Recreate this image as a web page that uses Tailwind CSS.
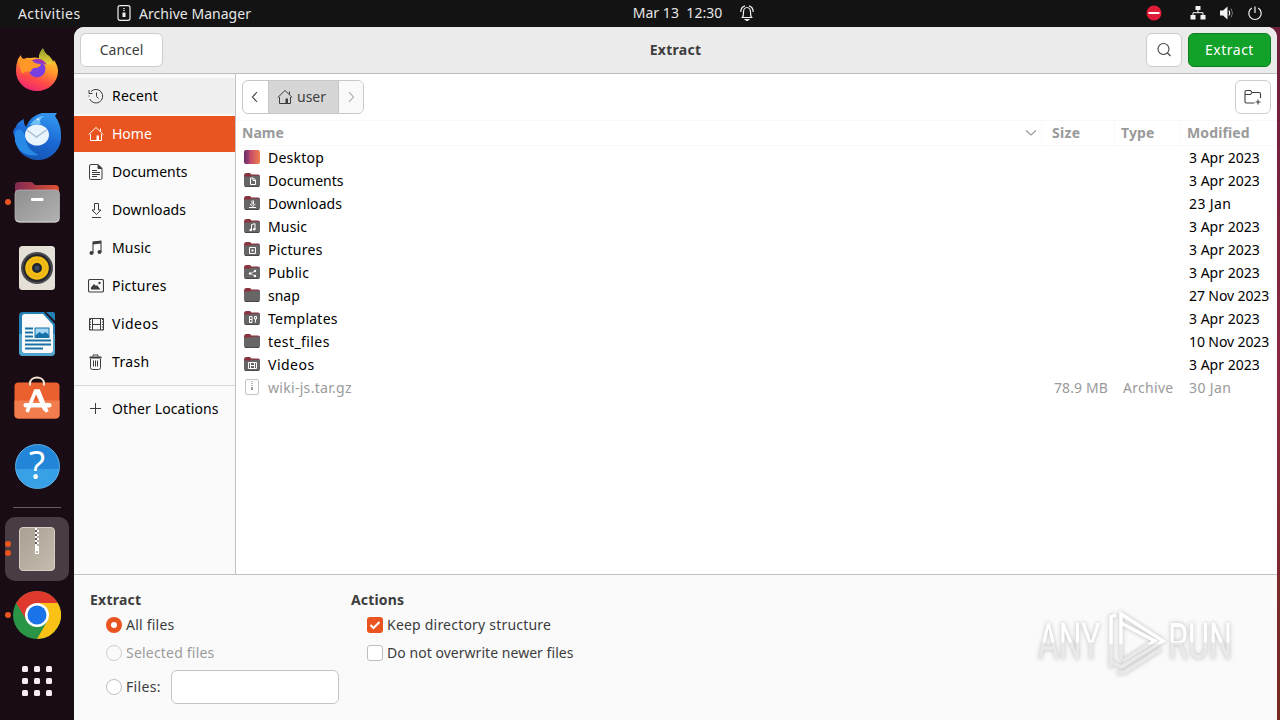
<!DOCTYPE html>
<html lang="en">
<head>
  <meta charset="UTF-8">
  <meta name="viewport" content="width=device-width, initial-scale=1.0">
  <title>Extract - Archive Manager</title>
  <script src="https://cdn.jsdelivr.net/npm/@tailwindcss/browser@4"></script>
</head>
<body class="w-[1280px] h-[720px] overflow-hidden bg-[#180b13] font-['Noto_Sans',sans-serif] text-[14px] leading-5 text-[#3d3d3d]">
  <!-- Shared shapes -->
  <svg class="hidden">
    <symbol id="folder" viewBox="0 0 16 16">
      <path d="M0 3.500Q0 1 2 1h4l1.500 1.500H14Q16 2.500 16 4.500V8H0z" fill="#8a3440"/>
      <path d="M0 5.500Q0 4.500 1 4.500h5L7.500 3.700H15q1 0 1 1V13q0 2-2 2H2q-2 0-2-2z" fill="#686566"/>
      <path d="M1 14.500h14" stroke="#4b4849"/>
    </symbol>
    <symbol id="home" viewBox="0 0 16 16">
      <path d="M.7 8.500 8 1.500l7.300 7M12.500 5V2.500M2.500 8v6.500h11V8" fill="none" stroke="currentColor"/>
      <path d="M8.500 9.500h2.500v5H8.500z" fill="currentColor"/>
    </symbol>
  </svg>

  <!-- Top bar -->
  <header class="grid grid-cols-3 h-[27px] items-center bg-[#131313] text-[#e6e6e6]">
    <div class="flex items-center pl-[18px]">
      <span class="w-[99px] tracking-[0.42px]">Activities</span>
      <svg class="w-[14px] h-[16px] mr-2 -mt-px" viewBox="0 0 14 16" fill="none" stroke="#f2f2f2">
        <rect x="1" y=".7" width="12" height="14.600" rx="2" stroke-width="1.200"/>
        <path d="M7 3v1M7 5v1" stroke-width="1.500"/><path d="M7 7.500v4.500" stroke-width="3"/>
      </svg>
      <span class="tracking-[0.04px]">Archive Manager</span>
    </div>
    <div class="flex items-center pl-[206px] -mt-px">
      <span class="whitespace-pre w-[106px] tracking-[0.05px]">Mar 13  12:30</span>
      <svg class="w-4 h-4" viewBox="0 0 16 16" fill="none" stroke="#f2f2f2" stroke-width="1.200">
        <path d="M2.500 12.500h11M3.500 12.500c1-1.500 1-3 1-5.500C4.500 4.500 6 2.500 8 2.500s3.500 2 3.500 4.500c0 2.500 0 4 1 5.500M1.800 7C1.800 4 3.500 1.500 6 .8M14.200 7C14.200 4 12.500 1.500 10 .8"/>
        <path d="M6.500 14.500h3L8 15.700z" fill="#f2f2f2"/>
      </svg>
    </div>
    <div class="flex items-center justify-end pr-[25px] -mt-px">
      <svg class="w-4 h-4 mr-[28px]" viewBox="0 0 16 16"><circle cx="8" cy="8" r="7.500" fill="#e01b38"/><path d="M2.500 8h11" stroke="#fff" stroke-width="2"/></svg>
      <svg class="w-4 h-4 mr-[13px]" viewBox="0 0 16 16" fill="#f2f2f2"><path d="M5.500 1h5v4h-5zM.5 10h5v4.500h-5zM10.500 10h5v4.500h-5z"/><path d="M8 5v3M3 10V7.700h10V10" fill="none" stroke="#f2f2f2"/></svg>
      <svg class="w-4 h-4 mr-[12px]" viewBox="0 0 16 16"><path d="M1 5.500h3L8.500 1.500v13L4 10.500H1z" fill="#f2f2f2"/><path d="M10 5.500q1.500 2.500 0 5" fill="none" stroke="#f2f2f2" stroke-width="1.200"/><path d="M12 3.500q3 4.500 0 9" fill="none" stroke="#777"/></svg>
      <svg class="w-4 h-4 -mr-2" viewBox="0 0 16 16" fill="none" stroke="#f2f2f2" stroke-width="1.200"><path d="M8 1.500v6.500M4.800 3A6.200 6.200 0 1 0 11.200 3"/></svg>
    </div>
  </header>

  <div class="flex h-[693px] bg-linear-to-b from-[#6b1d3a] via-[#8a2840] to-[#742a1e] bg-[length:20px_100%] bg-right bg-no-repeat">
    <!-- Dock -->
    <nav class="w-[74px] shrink-0 flex flex-col items-center pt-[10px] bg-[#190c14]">
      <div class="h-[66px] flex items-center">
        <svg class="w-12 h-12" viewBox="0 0 48 48">
          <defs>
            <linearGradient id="fx" x1=".8" y1="0" x2=".4" y2="1"><stop offset="0" stop-color="#f7e23e"/><stop offset=".45" stop-color="#ff9a2a"/><stop offset=".75" stop-color="#ff4a48"/><stop offset="1" stop-color="#ee2a70"/></linearGradient>
            <linearGradient id="fxt" x1="0" y1="0" x2="0" y2="1"><stop offset="0" stop-color="#8e9a2c"/><stop offset="1" stop-color="#f0d43a"/></linearGradient>
          </defs>
          <path d="M5 13q2-3 3-4 0 3 3 4 3-2 6-1 5-1 9 0 0-5 4-9 2 5 6 7 4 4 4 6l1-2q4 6 4 11a21 20 0 0 1-42 0q0-7 2-12z" fill="url(#fx)"/>
          <path d="M26 12q0-6 4-10 2 6 6 8 4 4 4 7l-7 2z" fill="url(#fxt)"/>
          <circle cx="24" cy="23" r="8.500" fill="#7a3fe0"/>
          <path d="M5 14q10-3 17 3 3 1 6 1-1 4-7 4-3 1-3 4-5-2-9 2z" fill="#ff9827"/>
          <path d="M18 15q8-5 14 1l2 3q-8-4-16-4z" fill="#a033a8"/>
        </svg>
      </div>
      <div class="h-[66px] flex items-center">
        <svg class="w-12 h-12" viewBox="0 0 48 48">
          <defs><linearGradient id="tb" x1=".7" y1="0" x2=".3" y2="1"><stop offset="0" stop-color="#3397ee"/><stop offset=".5" stop-color="#1a68d4"/><stop offset="1" stop-color="#1553b0"/></linearGradient></defs>
          <path d="M0 20q1-4 3-5 1-5 8-8-1 4 2 8Q18 3 29 1h15l-2 3q6 8 6 19a23 23 0 0 1-46 4z" fill="url(#tb)"/>
          <path d="M2 20q6-7 10 4 1 14 14 19Q7 46 2 29z" fill="#278ae6"/>
          <path d="M17 13q6-9 14-9-6 4-3 8z" fill="#6cc2f8"/>
          <ellipse cx="24" cy="23" rx="12" ry="10.500" fill="#e9f3fc"/>
          <path d="m14 18 9.500 7 10-7" fill="none" stroke="#a9bfd3" stroke-width="1.500"/><circle cx="25" cy="7.500" r="1" fill="#fff"/>
        </svg>
      </div>
      <div class="relative h-[66px] w-full flex items-center justify-center">
        <span class="absolute left-[5px] w-[6px] h-[6px] rounded-full bg-[#e95420]"></span>
        <svg class="w-12 h-12" viewBox="0 0 48 48">
          <defs><linearGradient id="fo"><stop offset="0" stop-color="#802a55"/><stop offset="1" stop-color="#e25033"/></linearGradient><linearGradient id="fg" x2="1" y2="1"><stop offset="0" stop-color="#8e8e8e"/><stop offset="1" stop-color="#b2b2b2"/></linearGradient></defs>
          <path d="M2 7q0-3 4-3h11q2 0 3 1l2 2h20q4 0 4 4v10H2z" fill="url(#fo)"/>
          <rect x="2" y="12" width="44.500" height="32" rx="4" fill="url(#fg)" stroke="#b8b8b8" stroke-width=".7"/>
          <path d="M3 42.500q2 1.500 4 1.500h35q3 0 4-2" fill="none" stroke="#d8d8d8"/><rect x="18" y="20" width="12.500" height="3" rx="1" fill="#fff"/>
        </svg>
      </div>
      <div class="h-[66px] flex items-center">
        <svg class="w-12 h-12" viewBox="0 0 48 48">
          <rect x="6" y="2" width="36" height="44" rx="3.500" fill="#e4e0d8"/>
          <circle cx="24" cy="24" r="16" fill="#4a4c52"/><circle cx="24" cy="24" r="14" fill="#26282c"/><circle cx="24" cy="24" r="11.800" fill="#f3bd16"/><circle cx="24" cy="24" r="8.500" fill="none" stroke="#e0a810" stroke-width=".7"/><circle cx="24" cy="24" r="5" fill="#20242c"/><circle cx="24" cy="24" r="2.500" fill="#3c4a60"/>
        </svg>
      </div>
      <div class="h-[66px] flex items-center">
        <svg class="w-12 h-12" viewBox="0 0 48 48">
          <rect x="6" y="2" width="36" height="44" rx="4" fill="#2480b5"/><path d="M6 24h36v18q0 4-4 4H10q-4 0-4-4z" fill="#53a4cb"/>
          <path d="M30 1h13v14z" fill="#190c14"/><path d="M33 2h7q2 0 2 2v7z" fill="#257fb3"/>
          <path d="M9 7q0-3 3-3h18l10 11v25q0 3-3 3H12q-3 0-3-3z" fill="#fafafa"/>
          <path d="M12 18.500h8M12 22.500h8M12 26.500h8M12 30.500h26M12 34.500h26M12 38.500h18" stroke="#1772a8" stroke-width="1.800"/>
          <rect x="22" y="18" width="14" height="9.500" fill="#a5d6f3" stroke="#1772a8"/><path d="m22.500 27v-2l4-3 3 2 3-2 3.500 3v2z" fill="#1772a8"/>
        </svg>
      </div>
      <div class="h-[66px] flex items-center">
        <svg class="w-12 h-12" viewBox="0 0 48 48">
          <rect x="1.500" y="6.500" width="45" height="36" rx="4" fill="#eb602f"/><path d="M1.500 24.500h45v14q0 4-4 4h-37q-4 0-4-4z" fill="#f17c4d"/>
          <path d="M17 9.500v-2c0-8 14-8 14 0v2" fill="none" stroke="#f5e8d8" stroke-width="2"/>
          <path d="M14 36 22.500 15h3L34 36M24 16l8 18" fill="none" stroke="#fff" stroke-width="3.600"/><rect x="10.500" y="27" width="28" height="4.500" rx="2" fill="#fff"/>
        </svg>
      </div>
      <div class="h-[66px] flex items-center">
        <div class="w-[45px] h-[45px] rounded-full border border-[#5cb3ea] bg-linear-to-b from-[#2385d8] from-55% to-[#38a0e6] to-55% flex items-center justify-center text-white text-[38px] leading-none font-['Open_Sans',sans-serif]"><span class="-mt-1">?</span></div>
      </div>
      <div class="w-12 h-px mt-2 mb-2 bg-[#665c62]"></div>
      <div class="relative h-[66px] w-full flex items-center justify-center">
        <div class="w-16 h-16 rounded-[10px] bg-[#483d44] flex items-center justify-center">
          <svg class="w-12 h-12" viewBox="0 0 48 48">
            <defs><linearGradient id="ar" x2="1" y2="1"><stop offset="0" stop-color="#a8a092"/><stop offset="1" stop-color="#c4bdae"/></linearGradient></defs>
            <rect x="6.500" y="2.500" width="35" height="43" rx="3.500" fill="url(#ar)" stroke="#d6d0c3"/>
            <path d="M23 3v18" stroke="#fff" stroke-width="2" stroke-dasharray="2 2"/><path d="M25 5v16" stroke="#fff" stroke-width="2" stroke-dasharray="2 2"/><path d="M23 3v18" stroke="#645c50" stroke-width="2" stroke-dasharray="2 2" stroke-dashoffset="2"/>
            <path d="M22 21h4v8h-4z" fill="#fff"/><path d="M23 27h2" stroke="#756d60"/>
          </svg>
        </div>
        <span class="absolute left-[5px] top-[25px] w-[6px] h-[6px] rounded-full bg-[#e95420]"></span>
        <span class="absolute left-[5px] top-[34px] w-[6px] h-[6px] rounded-full bg-[#e95420]"></span>
      </div>
      <div class="relative h-[66px] w-full flex items-center justify-center">
        <span class="absolute left-[5px] w-[6px] h-[6px] rounded-full bg-[#e95420]"></span>
        <svg class="w-12 h-12" viewBox="0 0 48 48">
          <circle cx="24" cy="24" r="24" fill="#2a9447"/>
          <path d="M24 24 3.200 12A24 24 0 0 1 44.800 12z" fill="#df382c"/><path d="M3.200 12 14 30l10-18z" fill="#df382c"/>
          <path d="M24 12h20.800A24 24 0 0 1 24 48l10.400-18z" fill="#fac116"/>
          <circle cx="24" cy="24" r="12" fill="#fff"/><circle cx="24" cy="24" r="9.500" fill="#1a73e8"/>
        </svg>
      </div>
      <div class="h-[66px] flex items-center">
        <div class="grid grid-cols-3 gap-[6px]">
          <i class="size-[6px] rounded-[1.5px] bg-[#f7eef4]"></i><i class="size-[6px] rounded-[1.5px] bg-[#f7eef4]"></i><i class="size-[6px] rounded-[1.5px] bg-[#f7eef4]"></i>
          <i class="size-[6px] rounded-[1.5px] bg-[#f7eef4]"></i><i class="size-[6px] rounded-[1.5px] bg-[#f7eef4]"></i><i class="size-[6px] rounded-[1.5px] bg-[#f7eef4]"></i>
          <i class="size-[6px] rounded-[1.5px] bg-[#f7eef4]"></i><i class="size-[6px] rounded-[1.5px] bg-[#f7eef4]"></i><i class="size-[6px] rounded-[1.5px] bg-[#f7eef4]"></i>
        </div>
      </div>
    </nav>

    <!-- Extract dialog -->
    <main class="w-[1203px] flex flex-col bg-[#fafafa] rounded-t-[10px] overflow-hidden">
      <div class="h-[47px] shrink-0 flex items-center justify-between border-b border-[#bdbdbd] bg-[#ebebeb] px-[6px]">
        <div class="w-[200px] flex"><button class="w-[83px] h-[34px] rounded-md border border-[#cdcdcd] bg-white">Cancel</button></div>
        <h1 class="font-bold tracking-[0.25px]">Extract</h1>
        <div class="w-[200px] flex justify-end gap-[6px]">
          <button class="w-9 h-[34px] rounded-md border border-[#cdcdcd] bg-white flex items-center justify-center">
            <svg class="w-4 h-4" viewBox="0 0 16 16" fill="none" stroke="#3d3d3d" stroke-width="1.100"><circle cx="7.500" cy="7" r="5.500"/><path d="m11.500 11 3 3"/></svg>
          </button>
          <button class="w-[83px] h-[34px] rounded-md border border-[#0b7f1b] bg-[#12a129] text-white tracking-[0.5px]">Extract</button>
        </div>
      </div>

      <div class="h-[500px] shrink-0 flex">
        <!-- Places -->
        <aside class="w-[162px] shrink-0 border-r border-[#c3c3c3] pt-1 flex flex-col gap-[2px] text-black">
          <div class="h-9 shrink-0 flex items-center gap-2 pl-[14px] bg-[#f0f0f0]">
            <svg class="w-4 h-4" viewBox="0 0 16 16" fill="none" stroke="#3d3d3d"><path d="M3 3.500A6.800 6.800 0 1 1 1.700 11M1 2v3.500h3.500M8.500 4.500V8.500l2 2"/><path d="M1 7.500v2" stroke-dasharray="1 1"/></svg>
            <span class="tracking-[0.2px]">Recent</span>
          </div>
          <div class="h-9 shrink-0 flex items-center gap-2 pl-[14px] bg-[#e95420] text-white">
            <svg class="w-4 h-4"><use href="#home"/></svg>
            <span>Home</span>
          </div>
          <div class="h-9 shrink-0 flex items-center gap-2 pl-[14px]">
            <svg class="w-4 h-4" viewBox="0 0 16 16" fill="none" stroke="#3d3d3d"><path d="M3 .5h6.500l4.500 4v9.500q0 1.500-1.500 1.500h-10Q1.500 15.500 1.500 14V2Q1.500 .5 3 .5zM4 6.500h5M4 8.500h8M4 10.500h8M4 12.500h5"/><path d="M10 .5v4h4z" fill="#3d3d3d"/></svg>
            <span>Documents</span>
          </div>
          <div class="h-9 shrink-0 flex items-center gap-2 pl-[14px]">
            <svg class="w-4 h-4" viewBox="0 0 16 16" fill="none" stroke="#3d3d3d"><path d="M6.500 1.500h4V8h2.500L8.500 12.500 4 8h2.500zM4 15.500h9"/></svg>
            <span class="tracking-[0.08px]">Downloads</span>
          </div>
          <div class="h-9 shrink-0 flex items-center gap-2 pl-[14px]">
            <svg class="w-4 h-4" viewBox="0 0 16 16" fill="#3d3d3d"><circle cx="3.500" cy="13" r="2"/><circle cx="11.500" cy="12" r="2"/><path d="M5 13V2l8-1v11" fill="none" stroke="#3d3d3d" stroke-width="1.100"/><path d="M5 2l8-1v2.500l-8 1z"/></svg>
            <span class="tracking-[0.15px]">Music</span>
          </div>
          <div class="h-9 shrink-0 flex items-center gap-2 pl-[14px]">
            <svg class="w-4 h-4" viewBox="0 0 16 16"><rect x=".5" y="1.500" width="15" height="12.500" rx="1.500" fill="none" stroke="#3d3d3d" stroke-width="1.200"/><path d="M3 11.500V9.500L6 6l2 2 1-1 3.500 4.500z" fill="#3d3d3d"/><circle cx="11.500" cy="5" r="1.200" fill="#3d3d3d"/></svg>
            <span class="tracking-[0.25px]">Pictures</span>
          </div>
          <div class="h-9 shrink-0 flex items-center gap-2 pl-[14px]">
            <svg class="w-4 h-4" viewBox="0 0 16 16" fill="none" stroke="#3d3d3d"><path d="M1.500 2.500h14v11.500h-14zM4.500 2.500V14M12.500 2.500V14M4.500 8.500h8"/><path d="M2.500 3v11M14.500 3v11" stroke-dasharray="1 1.500"/></svg>
            <span class="tracking-[0.5px]">Videos</span>
          </div>
          <div class="h-9 shrink-0 flex items-center gap-2 pl-[14px]">
            <svg class="w-4 h-4" viewBox="0 0 16 16" fill="none" stroke="#3d3d3d"><path d="M2.500 5v8.500q0 2 2 2h6q2 0 2-2V5M5.500 6.500v6M7.500 6.500v6M9.500 6.500v6M5 2.500V1h5v1.500"/><path d="M1.500 3.500h12" stroke-width="2"/></svg>
            <span class="tracking-[0.35px]">Trash</span>
          </div>
          <div class="h-px shrink-0 mt-[3px] mb-[3px] bg-[#d9d9d9]"></div>
          <div class="h-9 shrink-0 flex items-center gap-2 pl-[14px]">
            <svg class="w-4 h-4" viewBox="0 0 16 16" fill="none" stroke="#3d3d3d"><path d="M7.500 2v11M2 7.500h11"/></svg>
            <span class="tracking-[0.12px]">Other Locations</span>
          </div>
        </aside>

        <!-- File list -->
        <section class="w-[1041px] bg-white text-black">
          <div class="h-[46px] px-[6px] pt-[6px] flex justify-between">
            <div class="w-[122px] h-[34px] flex rounded-md border border-[#c8c8c8] overflow-hidden text-[#3d3d3d]">
              <button class="w-[25px] flex items-center justify-center pr-[2px]"><svg class="w-2 h-3" viewBox="0 0 8 12" fill="none" stroke="#3d3d3d" stroke-width="1.100"><path d="M6 1 1.500 6 6 11"/></svg></button>
              <button class="w-[71px] flex items-center gap-1 pl-2 border-x border-[#c4c4c4] bg-[#d6d6d6]"><svg class="w-4 h-4 shrink-0"><use href="#home"/></svg><span>user</span></button>
              <button class="w-[24px] flex items-center justify-center bg-[#fafafa]"><svg class="w-2 h-3" viewBox="0 0 8 12" fill="none" stroke="#a5a5a5" stroke-width="1.100"><path d="M2 1l4.500 5L2 11"/></svg></button>
            </div>
            <button class="w-9 h-[34px] rounded-md border border-[#cdcdcd] flex items-center justify-center">
              <svg class="w-[18px] h-4" viewBox="0 0 18 16" fill="none" stroke="#3d3d3d" stroke-width="1.100"><path d="M10.500 14H2.500Q1 14 1 12.500V3q0-1.500 1.500-1.500H6.500l1.500 2h7q1.500 0 1.500 1.500v4M1 5.500h5.500l1.500-2M14 10.500v5M11.500 13h5"/></svg>
            </button>
          </div>
          <div class="grid grid-cols-[806px_73px_66px_96px] h-[26px] items-center border-y border-[#f8f8f8] font-bold text-[#9a9a9a]">
            <div class="h-full flex items-center justify-between border-r border-[#fafafa] pl-[6px] pr-1"><span>Name</span><svg class="w-3 h-2" viewBox="0 0 12 8" fill="none" stroke="#9a9a9a" stroke-width="1.200"><path d="m1 1.500 5 4.500 5-4.500"/></svg></div>
            <div class="h-full flex items-center border-r border-[#fafafa] pl-[10px] tracking-[0.3px]">Size</div>
            <div class="h-full flex items-center border-r border-[#fafafa] pl-[6px] tracking-[0.1px]">Type</div>
            <div class="pl-[6px] tracking-[0.12px]">Modified</div>
          </div>
          <div class="grid grid-cols-[810px_69px_66px_96px] auto-rows-[23px] items-center whitespace-nowrap">
            <div class="flex items-center gap-2 pl-2">
              <svg class="w-4 h-4 -translate-y-px" viewBox="0 0 16 16"><defs><linearGradient id="dk"><stop offset="0" stop-color="#6d2a66"/><stop offset=".3" stop-color="#983f70"/><stop offset=".35" stop-color="#c04667"/><stop offset="1" stop-color="#f08050"/></linearGradient></defs><rect y="1" width="16" height="14" rx="2" fill="url(#dk)"/></svg>
              <span class="tracking-[0.25px]">Desktop</span>
            </div><div></div><div></div><div class="pl-2">3 Apr 2023</div>

            <div class="flex items-center gap-2 pl-2">
              <svg class="w-4 h-4 -translate-y-px" viewBox="0 0 16 16"><use href="#folder"/><path d="M6.500 6h3l2 2v4.500h-5zM9 6v2.500h2.500" fill="none" stroke="#fff"/></svg>
              <span>Documents</span>
            </div><div></div><div></div><div class="pl-2">3 Apr 2023</div>

            <div class="flex items-center gap-2 pl-2">
              <svg class="w-4 h-4 -translate-y-px" viewBox="0 0 16 16"><use href="#folder"/><path d="M8 5.500v4M9.500 5.500v4M6 9l2.700 2.500L11.500 9M5 12.500h7" fill="none" stroke="#fff"/></svg>
              <span class="tracking-[0.08px]">Downloads</span>
            </div><div></div><div></div><div class="pl-2 tracking-[0.4px]">23 Jan</div>

            <div class="flex items-center gap-2 pl-2">
              <svg class="w-4 h-4 -translate-y-px" viewBox="0 0 16 16"><use href="#folder"/><path d="M7.500 12V6.500l3.500-.8V11" fill="none" stroke="#fff"/><circle cx="6.700" cy="12" r="1.200" fill="#fff"/><circle cx="10.200" cy="11.200" r="1.200" fill="#fff"/></svg>
              <span class="tracking-[0.15px]">Music</span>
            </div><div></div><div></div><div class="pl-2">3 Apr 2023</div>

            <div class="flex items-center gap-2 pl-2">
              <svg class="w-4 h-4 -translate-y-px" viewBox="0 0 16 16"><use href="#folder"/><path d="M5.500 6.500h6v6h-6z" fill="none" stroke="#fff"/><path d="M7.500 8.500h2v2h-2z" fill="#fff"/></svg>
              <span class="tracking-[0.25px]">Pictures</span>
            </div><div></div><div></div><div class="pl-2">3 Apr 2023</div>

            <div class="flex items-center gap-2 pl-2">
              <svg class="w-4 h-4 -translate-y-px" viewBox="0 0 16 16"><use href="#folder"/><path d="m11 7-4.500 2.500L11 12" fill="none" stroke="#fff" stroke-width=".7"/><circle cx="6" cy="9.500" r="1.200" fill="#fff"/><circle cx="11" cy="7" r="1.200" fill="#fff"/><circle cx="11" cy="12" r="1.200" fill="#fff"/></svg>
              <span class="tracking-[0.25px]">Public</span>
            </div><div></div><div></div><div class="pl-2">3 Apr 2023</div>

            <div class="flex items-center gap-2 pl-2">
              <svg class="w-4 h-4 -translate-y-px"><use href="#folder"/></svg>
              <span>snap</span>
            </div><div></div><div></div><div class="pl-2 tracking-[-0.1px]">27 Nov 2023</div>

            <div class="flex items-center gap-2 pl-2">
              <svg class="w-4 h-4 -translate-y-px" viewBox="0 0 16 16"><use href="#folder"/><path d="M5.500 6.500h2.500v6H5.500zM5.500 9.500H8M10.500 6.500h2v2.500h-2zM11.500 9v3.500" fill="none" stroke="#fff"/></svg>
              <span class="tracking-[0.25px]">Templates</span>
            </div><div></div><div></div><div class="pl-2">3 Apr 2023</div>

            <div class="flex items-center gap-2 pl-2">
              <svg class="w-4 h-4 -translate-y-px"><use href="#folder"/></svg>
              <span class="tracking-[0.42px]">test_files</span>
            </div><div></div><div></div><div class="pl-2 tracking-[-0.1px]">10 Nov 2023</div>

            <div class="flex items-center gap-2 pl-2">
              <svg class="w-4 h-4 -translate-y-px" viewBox="0 0 16 16"><use href="#folder"/><path d="M4.500 6.500h8v6h-8zM6.500 6.500v6M10.500 6.500v6M6.500 9.500h4" fill="none" stroke="#fff"/></svg>
              <span class="tracking-[0.5px]">Videos</span>
            </div><div></div><div></div><div class="pl-2">3 Apr 2023</div>

            <div class="flex items-center gap-2 pl-2 text-[#9a9a9a]">
              <svg class="w-4 h-4 -translate-y-px" viewBox="0 0 16 16" fill="none"><rect x="1.500" y=".5" width="13" height="15" rx="1.500" stroke="#c4c4c4"/><path d="M8 2v6" stroke="#777" stroke-dasharray="1 1"/><path d="M8 8v3" stroke="#777" stroke-width="1.500"/></svg>
              <span class="tracking-[0.3px]">wiki-js.tar.gz</span>
            </div><div class="pl-2 text-[#9a9a9a] tracking-[0.1px]">78.9 MB</div><div class="pl-2 text-[#9a9a9a] tracking-[0.3px]">Archive</div><div class="pl-2 text-[#9a9a9a] tracking-[0.4px]">30 Jan</div>
          </div>
        </section>
      </div>

      <!-- Extract options -->
      <div class="relative grow flex border-t border-[#c3c3c3] pl-4 pt-[15px]">
        <div class="w-[261px]">
          <h2 class="font-bold tracking-[0.25px]">Extract</h2>
          <label class="flex items-center h-5 mt-[5px] pl-4 gap-1 tracking-[0.22px]">
            <span class="size-4 rounded-full bg-[#e95420] flex items-center justify-center"><span class="size-[6px] rounded-full bg-white"></span></span>All files
          </label>
          <label class="flex items-center h-5 mt-2 pl-4 gap-1 text-[#9a9a9a] tracking-[0.2px]">
            <span class="size-4 rounded-full border border-[#cfcfcf]"></span>Selected files
          </label>
          <label class="flex items-center h-[34px] mt-[7px] pl-4 gap-1">
            <span class="size-4 rounded-full border border-[#bfbfbf] bg-white"></span><span class="w-[41px] tracking-[0.35px]">Files:</span>
            <input type="text" class="w-[168px] h-[34px] rounded-md border border-[#c4c4c4] bg-white">
          </label>
        </div>
        <div>
          <h2 class="font-bold tracking-[0.15px]">Actions</h2>
          <label class="flex items-center h-5 mt-[5px] pl-4 gap-1 tracking-[0.21px]">
            <span class="size-4 rounded-[3px] bg-[#e95420]"><svg class="size-4" viewBox="0 0 16 16" fill="none" stroke="#fff" stroke-width="2"><path d="m3.500 8 3 3 6-6"/></svg></span>Keep directory structure
          </label>
          <label class="flex items-center h-5 mt-2 pl-4 gap-1 tracking-[0.04px]">
            <span class="size-4 rounded-[3px] border border-[#bfbfbf] bg-white"></span>Do not overwrite newer files
          </label>
        </div>
        <!-- Watermark -->
        <svg class="absolute left-[956px] top-[28px] w-[220px] h-[76px] drop-shadow-[0_0_2px_#bbbbbb]" viewBox="0 0 220 76">
          <defs><linearGradient id="wm" x2="0" y2="1"><stop offset=".5" stop-color="#fff"/><stop offset=".52" stop-color="#e9e9e9"/></linearGradient></defs>
          <g fill="url(#wm)" font-family="Roboto, sans-serif" font-size="50">
            <text transform="translate(8 56) scale(.64 1)">ANY</text>
            <text transform="translate(138 56) scale(.65 1)">RUN</text>
          </g>
          <path d="M81 65V14l5-2M91 56V11l42 27-42 26-9-5M91 20l34 18-32 20M87 70l8-1 36-23" fill="none" stroke="url(#wm)" stroke-width="3.500"/>
        </svg>
      </div>
    </main>
  </div>
</body>
</html>
